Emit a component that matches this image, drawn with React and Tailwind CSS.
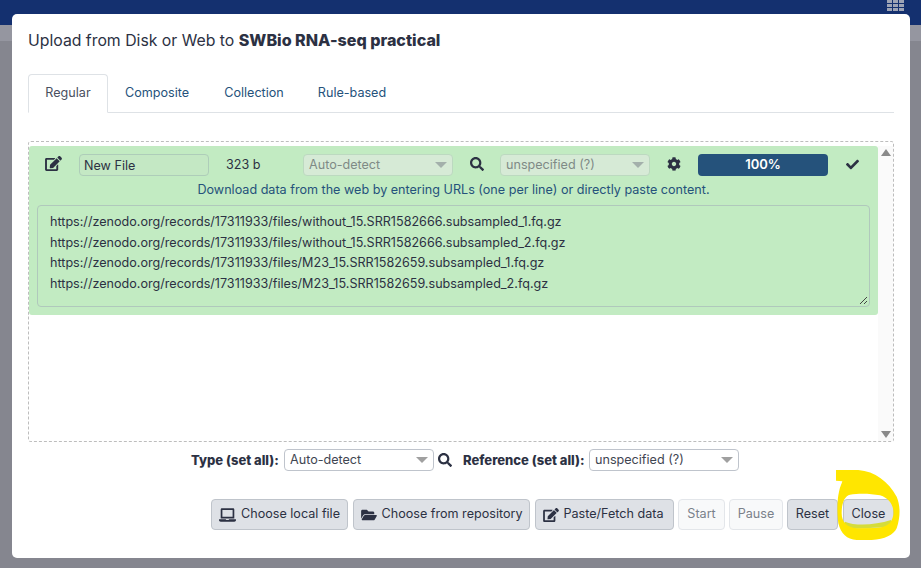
import React from "react";
import { FaEdit, FaSearch, FaCog, FaCheck, FaLaptop, FaFolderOpen } from "react-icons/fa";

const urls = [
  "https://zenodo.org/records/17311933/files/without_15.SRR1582666.subsampled_1.fq.gz",
  "https://zenodo.org/records/17311933/files/without_15.SRR1582666.subsampled_2.fq.gz",
  "https://zenodo.org/records/17311933/files/M23_15.SRR1582659.subsampled_1.fq.gz",
  "https://zenodo.org/records/17311933/files/M23_15.SRR1582659.subsampled_2.fq.gz",
];

function Caret({ className }) {
  return <span className={"w-0 h-0 border-x-[6px] border-x-transparent border-t-[6px] " + className} />;
}

function Select({ label, width, disabled }) {
  return (
    <div
      className={
        "h-[22px] flex items-center justify-between pl-[5px] pr-[5px] rounded-[4px] border text-[12.6px] " +
        width +
        (disabled
          ? " bg-[#d6ead6] border-[#bcd9c0] text-[#7f8a86]"
          : " bg-white border-[#bfc4cc] text-[#3f4652]")
      }
    >
      <span>{label}</span>
      <Caret className={disabled ? "border-t-[#a3b0ab]" : "border-t-[#a0a0a0]"} />
    </div>
  );
}

function Btn({ icon, children, width, disabled }) {
  return (
    <div
      className={
        "h-[31px] flex items-center justify-center gap-[5px] rounded-[4px] border text-[12.6px] " +
        width +
        (disabled
          ? " bg-[#f8f9fa] border-[#e3e6ea] text-[#7b818b]"
          : " bg-[#dee1e6] border-[#bfc4cb] text-[#2c3143]")
      }
    >
      {icon}
      <span>{children}</span>
    </div>
  );
}

export default function App() {
  return (
    <div className="relative w-[921px] h-[568px] overflow-hidden bg-[#85868f] pt-[14px] pl-[12px] font-['Inter','Liberation_Sans',sans-serif] text-[#2c3143]">
      <div className="absolute inset-x-0 top-0 h-[25px] bg-[#14306f]" />
      <div className="absolute inset-x-0 top-[25px] h-[16px] bg-[#9596a0]" />
      <div className="absolute left-[887px] top-0 grid grid-cols-3 grid-rows-3 gap-[1px] w-[17px] h-[11px]">
        {Array.from({ length: 9 }).map((_, i) => (
          <div key={i} className="bg-[#9ea4b5]" />
        ))}
      </div>

      <div className="relative w-[898px] h-[544px] bg-white rounded-[5px] px-[16px] flex flex-col">
        <div className="h-[60px] pt-[14px] text-[15.8px] leading-[24px] text-[#2c3143]">
          Upload from Disk or Web to <b className="text-[16.1px] font-extrabold">SWBio RNA-seq practical</b>
        </div>

        <div className="flex h-[39px] border-b border-[#dee2e6] text-[12.6px] text-[#25527b]">
          <div className="w-[80px] h-[39px] flex items-center justify-center rounded-t-[4px] border border-[#dee2e6] border-b-white bg-white text-[#4a5060]">
            Regular
          </div>
          <div className="w-[98px] flex items-center justify-center">Composite</div>
          <div className="w-[96px] flex items-center justify-center">Collection</div>
          <div className="w-[106px] flex items-center justify-center -ml-[3px]">Rule-based</div>
        </div>

        <div className="mt-[28px] w-[866px] h-[301px] border border-dashed border-[#bdbdbd] rounded-[3px] flex pt-[4px]">
          <div className="w-[849px] h-[169px] bg-[#c2ebc2] rounded-[3px] px-[8px] flex flex-col">
            <div className="flex items-center h-[22px] mt-[8px]">
              <FaEdit className="ml-[8px] w-[17px] h-[15px] text-[#2c3143] -mt-[4px]" />
              <div className="ml-[17px] w-[130px] h-[22px] rounded-[4px] border border-[#aecdb9] bg-[#c4e8c4] pl-[4px] pt-[2px] flex items-center text-[12.6px] text-[#2c3143]">
                New File
              </div>
              <span className="ml-[17px] w-[77px] text-[12.6px] text-[#2c3143]">323 b</span>
              <Select label="Auto-detect" width="w-[150px]" disabled />
              <FaSearch className="ml-[17px] w-[14px] h-[14px] text-[#2c3143] -mt-[2px]" />
              <Select label="unspecified (?)" width="ml-[16px] w-[150px]" disabled />
              <FaCog className="ml-[17px] w-[14px] h-[14px] text-[#2c3143] -mt-[2px]" />
              <div className="ml-[17px] w-[130px] h-[22px] rounded-[4px] bg-[#25527b] flex items-center justify-center text-[13px] font-semibold text-white">
                100%
              </div>
              <FaCheck className="ml-[17px] w-[15px] h-[13px] text-[#2c3143] -mt-[2px]" />
            </div>
            <div className="h-[20px] mt-[4px] text-center text-[12.6px] leading-[20px] text-[#25527b]">
              Download data from the web by entering URLs (one per line) or directly paste content.
            </div>
            <div className="relative mt-[5px] w-[833px] h-[102px] rounded-[4px] border border-[#b0c8bc] pt-[6px] pl-[12px] text-[12.6px] leading-[20.5px] text-[#2c3143]">
              {urls.map((u) => (
                <div key={u}>{u}</div>
              ))}
              <svg className="absolute right-[1px] bottom-[1px]" width="9" height="9" viewBox="0 0 9 9">
                <path d="M1 8 L8 1 M5 8 L8 5" stroke="#444" strokeWidth="1" />
              </svg>
            </div>
          </div>
          <div className="w-[15px] h-[295px] bg-[#fafafa] flex flex-col items-center justify-between py-[3px]">
            <span className="w-0 h-0 border-x-[5px] border-x-transparent border-b-[7px] border-b-[#8a8a8a]" />
            <span className="w-0 h-0 border-x-[5px] border-x-transparent border-t-[7px] border-t-[#8a8a8a]" />
          </div>
        </div>

        <div className="mt-[7px] h-[22px] flex items-center text-[13px]">
          <b className="ml-[163px] w-[93px] pt-[2px] font-extrabold">Type (set all):</b>
          <Select label="Auto-detect" width="w-[150px]" />
          <FaSearch className="ml-[4px] w-[14px] h-[14px] text-[#2c3143]" />
          <b className="ml-[11px] w-[126px] pt-[2px] font-extrabold">Reference (set all):</b>
          <Select label="unspecified (?)" width="w-[150px]" />
        </div>

        <div className="mt-[28px] flex justify-end gap-[4px] w-[866px]">
          <div className="flex gap-[5px]">
            <Btn width="w-[137px]" icon={<FaLaptop className="w-[17px] h-[14px]" />}>Choose local file</Btn>
            <Btn width="w-[177px]" icon={<FaFolderOpen className="w-[16px] h-[14px]" />}>Choose from repository</Btn>
            <Btn width="w-[139px]" icon={<FaEdit className="w-[16px] h-[14px] -ml-[2px] -mr-[1px]" />}>Paste/Fetch data</Btn>
          </div>
          <div className="flex gap-[4px]">
            <Btn width="w-[47px]" disabled>Start</Btn>
            <Btn width="w-[54px]" disabled>Pause</Btn>
            <Btn width="w-[51px]">Reset</Btn>
          </div>
          <div className="ml-[1px]">
            <Btn width="w-[51px]">Close</Btn>
          </div>
        </div>

        <svg className="absolute left-[813px] top-[446px]" width="85" height="90" viewBox="0 0 255 270">
          <path
            d="M60 185 C90 198 150 196 198 180 L205 200 L60 208 Z"
            fill="#d5dc3a"
          />
          <path
            fillRule="evenodd"
            fill="#ffe600"
            d="M33 30 L100 30 C150 34 190 65 215 110 C225 135 228 165 215 205 C205 225 180 238 140 240 L95 240 C65 238 48 222 40 190 C36 160 36 120 42 95 C45 80 50 72 52 64 L33 62 Z
               M75 104 C60 108 50 125 50 160 C50 185 65 203 95 205 L150 204 C185 202 200 192 205 165 C208 140 195 115 165 106 C135 100 100 100 75 104 Z"
          />
        </svg>
      </div>
    </div>
  );
}
